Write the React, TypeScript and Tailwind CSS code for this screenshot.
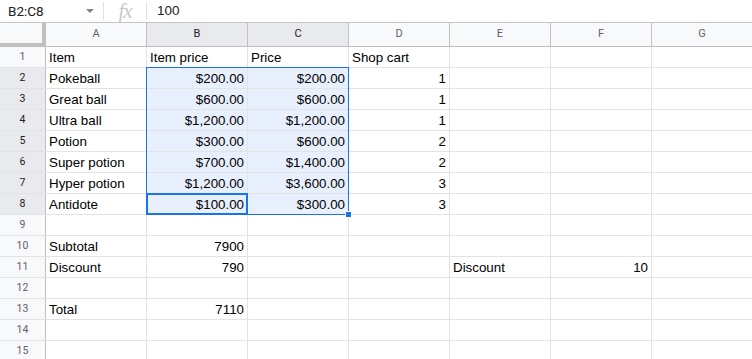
const cols = ['A', 'B', 'C', 'D', 'E', 'F', 'G']

type Row = Partial<Record<string, string>>

const data: Record<number, Row> = {
  1: { A: 'Item', B: 'Item price', C: 'Price', D: 'Shop cart' },
  2: { A: 'Pokeball', B: '$200.00', C: '$200.00', D: '1' },
  3: { A: 'Great ball', B: '$600.00', C: '$600.00', D: '1' },
  4: { A: 'Ultra ball', B: '$1,200.00', C: '$1,200.00', D: '1' },
  5: { A: 'Potion', B: '$300.00', C: '$600.00', D: '2' },
  6: { A: 'Super potion', B: '$700.00', C: '$1,400.00', D: '2' },
  7: { A: 'Hyper potion', B: '$1,200.00', C: '$3,600.00', D: '3' },
  8: { A: 'Antidote', B: '$100.00', C: '$300.00', D: '3' },
  10: { A: 'Subtotal', B: '7900' },
  11: { A: 'Discount', B: '790', E: 'Discount', F: '10' },
  13: { A: 'Total', B: '7110' },
}

const isNum = (v: string) => /^[$\d]/.test(v)

function Cell({ value, selected }: { value?: string; selected: boolean }) {
  const right = value !== undefined && isNum(value)
  return (
    <div
      className={
        'h-full w-[101px] shrink-0 border-r border-[#e2e3e3] px-[3px] pt-[2px] flex items-center overflow-hidden whitespace-nowrap ' +
        (right ? 'justify-end ' : 'justify-start ') +
        (selected ? 'bg-[#e8f0fe]' : 'bg-white')
      }
    >
      {value}
    </div>
  )
}

function FormulaBar() {
  return (
    <div className="h-[23px] border-b border-[#c4c7c5] flex items-center bg-white">
      <div className="w-[103px] flex items-center justify-between pl-[8px] pr-[9px] text-[13.5px] text-[#202124] font-['Roboto',sans-serif]">
        <span>B2:C8</span>
        <span className="w-0 h-0 border-l-[4px] border-r-[4px] border-t-[4px] border-l-transparent border-r-transparent border-t-[#80868b]" />
      </div>
      <div className="w-px h-[18px] bg-[#e0e0e0]" />
      <div className="w-[42px] h-[22px] flex items-center justify-center">
        <span className="font-['Liberation_Serif',serif] italic text-[21px] text-[#c8c8c8] leading-[22px] tracking-[-1px]">fx</span>
      </div>
      <div className="w-px h-[18px] bg-[#e0e0e0]" />
      <span className="pl-[10px] text-[13.5px] text-[#202124] font-['Liberation_Sans',Arial,sans-serif]">100</span>
    </div>
  )
}

export default function App() {
  const rowNums = Array.from({ length: 15 }, (_, i) => i + 1)
  return (
    <div className="relative w-[752px] h-[359px] overflow-hidden bg-white font-['Liberation_Sans',Arial,sans-serif] text-[13.33px] text-black">
      <FormulaBar />
      {/* column header */}
      <div className="h-[24px] flex border-b border-[#c0c0c0] bg-[#f8f9fa]">
        <div className="w-[46px] shrink-0 border-r-[4px] border-b-[3px] border-[#c0c0c0] bg-[#f8f9fa]" />
        {cols.map(c => {
          const sel = c === 'B' || c === 'C'
          return (
            <div
              key={c}
              className={
                'w-[101px] shrink-0 border-r border-[#c0c0c0] flex items-center justify-center text-[11px] font-["Roboto",sans-serif] ' +
                (sel ? 'bg-[#e8eaed] text-[#202124]' : 'text-[#5f6368]')
              }
            >
              {c}
            </div>
          )
        })}
      </div>
      {rowNums.map(r => {
        const selRow = r >= 2 && r <= 8
        return (
          <div key={r} className="h-[21px] flex border-b border-[#e2e3e3]">
            <div
              className={
                'w-[46px] shrink-0 border-r border-[#c0c0c0] flex items-center justify-center text-[10.5px] font-["Roboto",sans-serif] ' +
                (selRow ? 'bg-[#e8eaed] text-[#202124]' : 'bg-[#f8f9fa] text-[#5f6368]')
              }
            >
              {r}
            </div>
            {cols.map(c => (
              <Cell key={c} value={data[r]?.[c]} selected={selRow && (c === 'B' || c === 'C')} />
            ))}
          </div>
        )
      })}
      {/* selection overlay */}
      <div className="absolute left-[146px] top-[67px] w-[203px] h-[148px] border border-[#1a73e8] pointer-events-none" />
      <div className="absolute left-[146px] top-[193px] w-[102px] h-[22px] border-2 border-[#1a73e8] pointer-events-none" />
      <div className="absolute left-[345px] top-[211px] w-[7px] h-[7px] bg-[#1a73e8] border border-white pointer-events-none" />
    </div>
  )
}
